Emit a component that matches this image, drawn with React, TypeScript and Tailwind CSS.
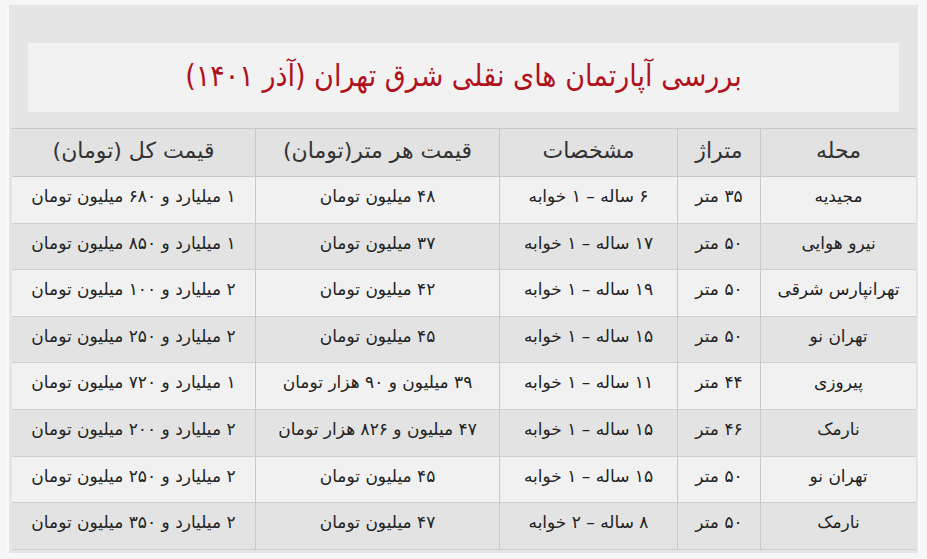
import React from 'react';

const rows = [
  ['مجیدیه', '۳۵ متر', '۶ ساله – ۱ خوابه', '۴۸ میلیون تومان', '۱ میلیارد و ۶۸۰ میلیون تومان'],
  ['نیرو هوایی', '۵۰ متر', '۱۷ ساله – ۱ خوابه', '۳۷ میلیون تومان', '۱ میلیارد و ۸۵۰ میلیون تومان'],
  ['تهرانپارس شرقی', '۵۰ متر', '۱۹ ساله – ۱ خوابه', '۴۲ میلیون تومان', '۲ میلیارد و ۱۰۰ میلیون تومان'],
  ['تهران نو', '۵۰ متر', '۱۵ ساله – ۱ خوابه', '۴۵ میلیون تومان', '۲ میلیارد و ۲۵۰ میلیون تومان'],
  ['پیروزی', '۴۴ متر', '۱۱ ساله – ۱ خوابه', '۳۹ میلیون و ۹۰ هزار تومان', '۱ میلیارد و ۷۲۰ میلیون تومان'],
  ['نارمک', '۴۶ متر', '۱۵ ساله – ۱ خوابه', '۴۷ میلیون و ۸۲۶ هزار تومان', '۲ میلیارد و ۲۰۰ میلیون تومان'],
  ['تهران نو', '۵۰ متر', '۱۵ ساله – ۱ خوابه', '۴۵ میلیون تومان', '۲ میلیارد و ۲۵۰ میلیون تومان'],
  ['نارمک', '۵۰ متر', '۸ ساله – ۲ خوابه', '۴۷ میلیون تومان', '۲ میلیارد و ۳۵۰ میلیون تومان'],
];

const headers = ['محله', 'متراژ', 'مشخصات', 'قیمت هر متر(تومان)', 'قیمت کل (تومان)'];

export default function App() {
  return (
    <div className="w-[927px] h-[559px] bg-[#f6f6f6] pt-[5px] pl-[7px] font-['DejaVu_Sans',sans-serif]">
      <div dir="rtl" className="w-[913px] h-[548px] bg-[#e5e5e5] border-l-2 border-r-2 border-[#fafafa] px-[2px] pt-[38px]">
        <div className="mx-[17px] h-[69px] bg-[#f2f2f2] flex items-center justify-center pb-1">
          <h1 className="text-[30px] text-[#b0121d] font-['DejaVu_Sans_Condensed','DejaVu_Sans',sans-serif]">
            بررسی آپارتمان های نقلی شرق تهران (آذر ۱۴۰۱)
          </h1>
        </div>

        <div className="mt-[16px] grid grid-cols-[155px_83px_178px_244px_244px] border-t border-[#c9c9c9] text-[#222]">
          {headers.map((h, i) => (
            <div
              key={h}
              className={`h-[48px] flex items-center justify-center bg-[#e2e2e2] text-[22px] text-[#333] border-b border-[#c9c9c9] pb-1 ${i > 0 ? 'border-r' : ''}`}
            >
              {h}
            </div>
          ))}
          {rows.map((row, r) =>
            row.map((cell, i) => (
              <div
                key={r + '-' + i}
                className={`h-[46.6px] flex items-center justify-center text-[17px] whitespace-nowrap border-b border-[#cfcfcf] pb-[6px] ${r % 2 === 0 ? 'bg-[#f1f1f1]' : 'bg-[#e3e3e3]'} ${i > 0 ? 'border-r border-r-[#c9c9c9]' : ''}`}
              >
                {cell}
              </div>
            ))
          )}
        </div>
      </div>
    </div>
  );
}
